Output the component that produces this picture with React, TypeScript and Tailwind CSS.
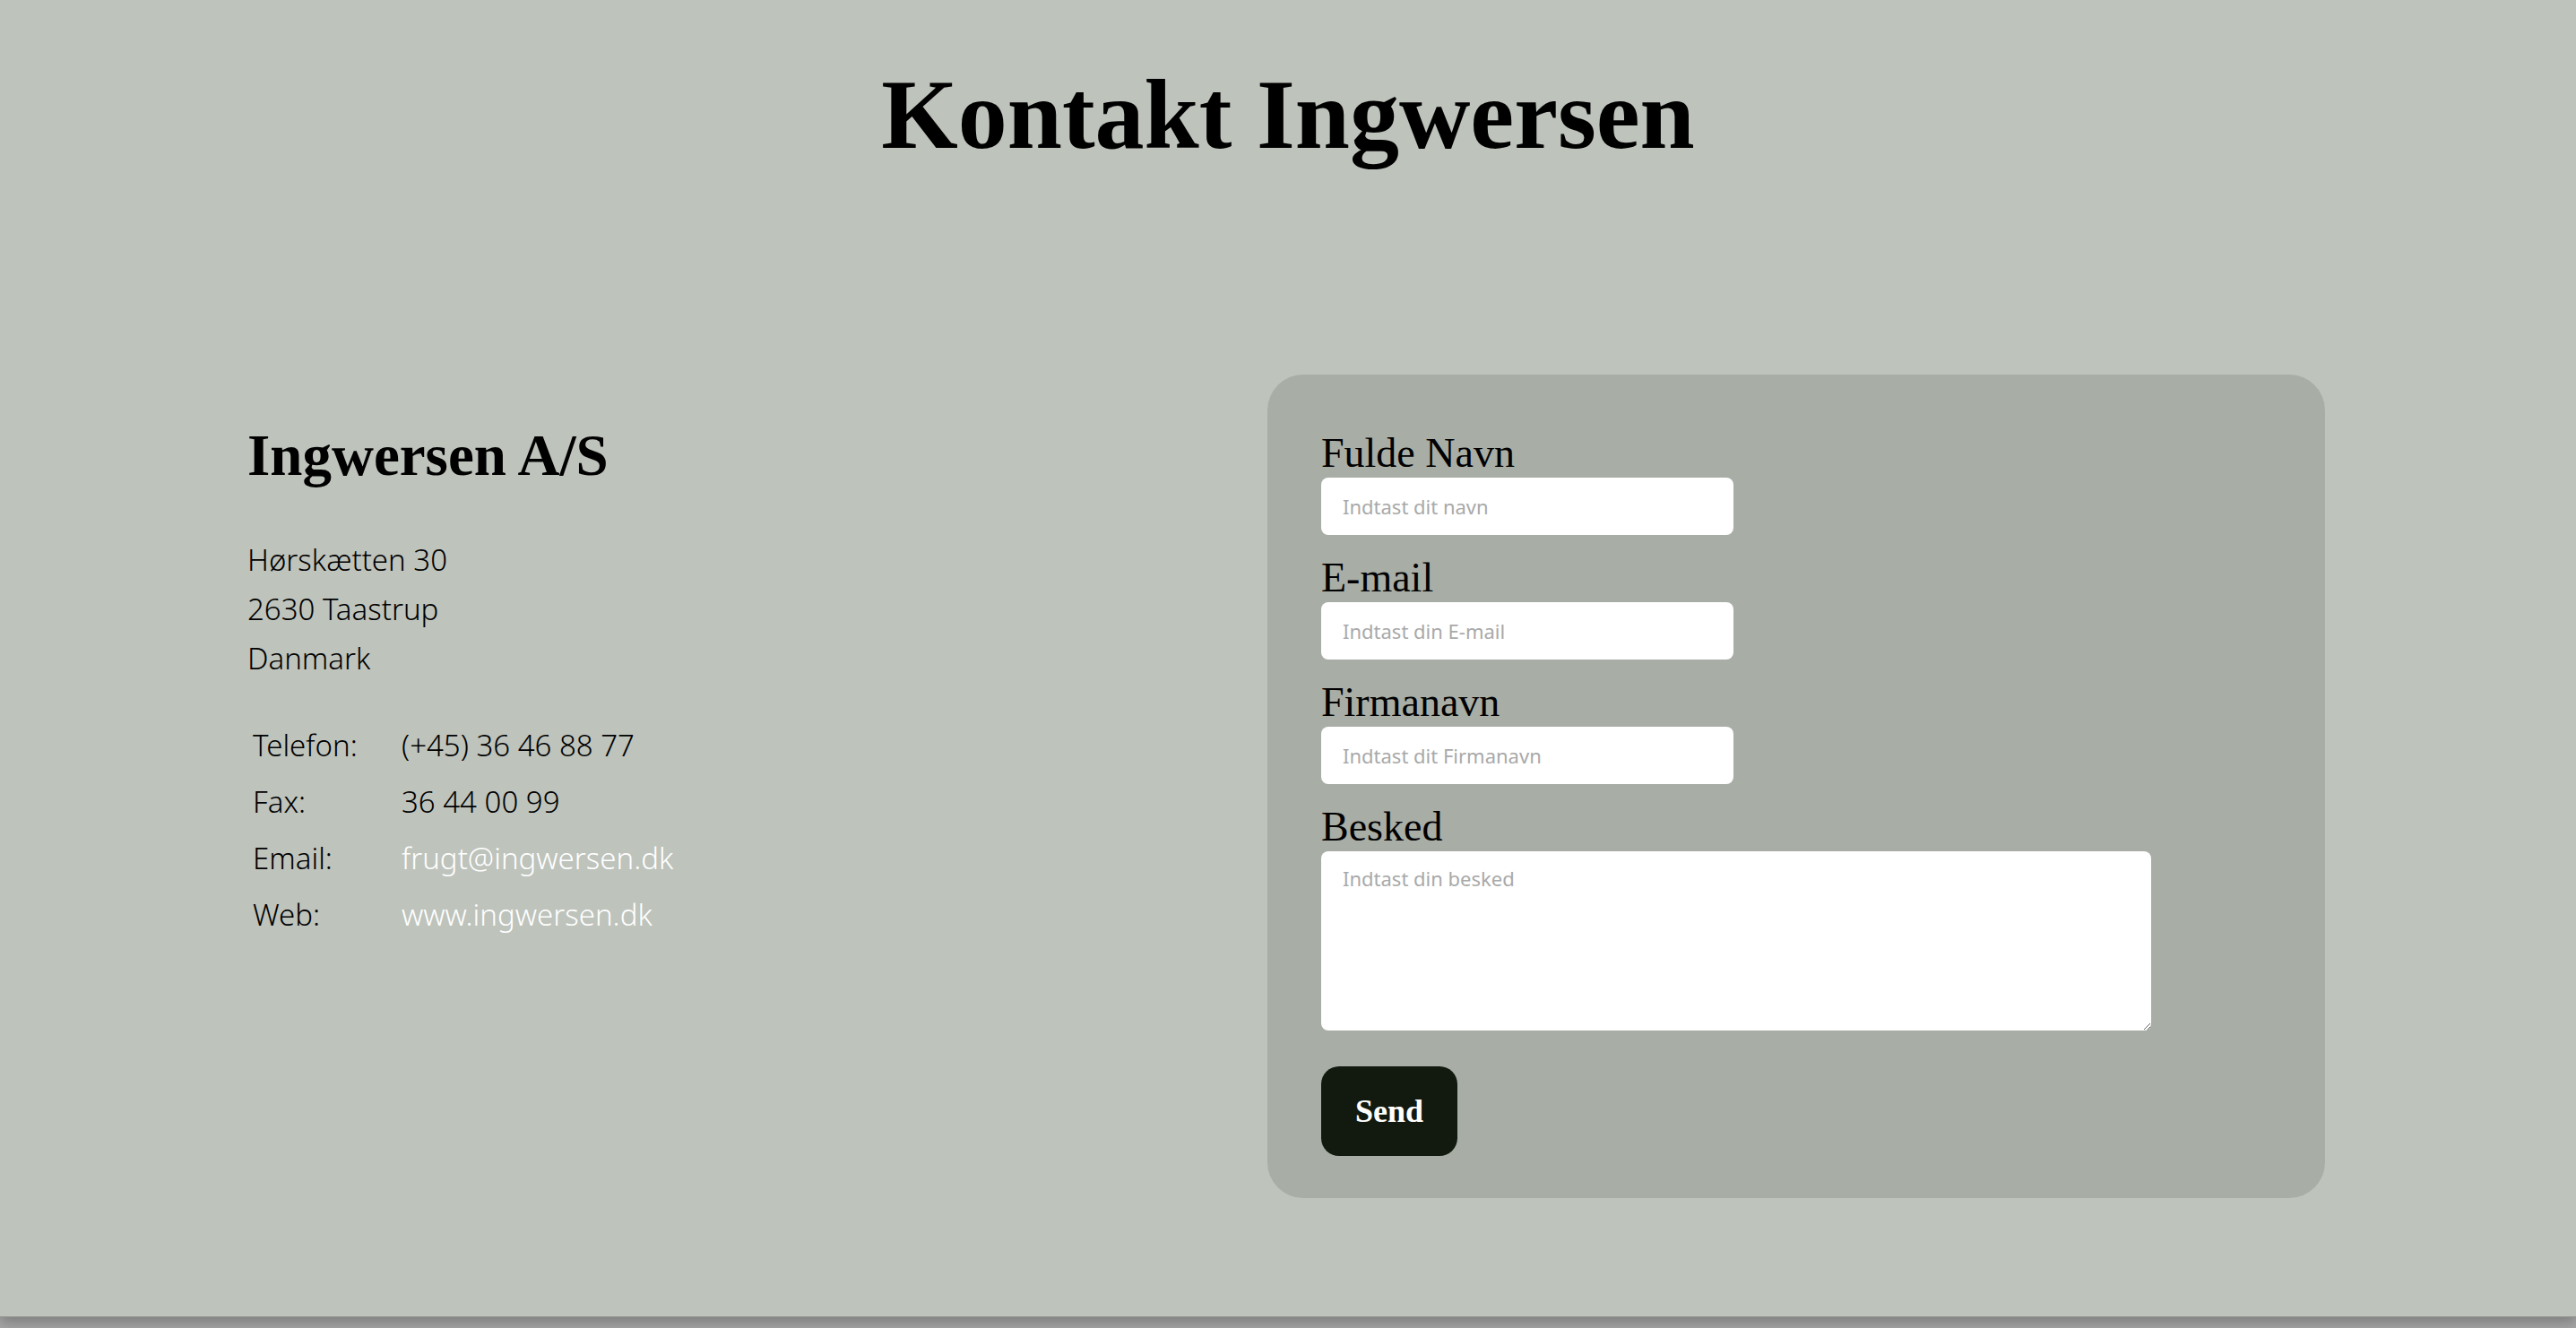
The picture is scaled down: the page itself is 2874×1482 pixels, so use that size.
import React from 'react'

const serif = { fontFamily: '"Liberation Serif", "Times New Roman", serif' }
const sans = { fontFamily: '"Noto Sans", "Open Sans", sans-serif' }

const contactRows = [
  { label: 'Telefon:', value: '(+45) 36 46 88 77', link: false },
  { label: 'Fax:', value: '36 44 00 99', link: false },
  { label: 'Email:', value: 'frugt@ingwersen.dk', link: true },
  { label: 'Web:', value: 'www.ingwersen.dk', link: true },
]

function Field({ label, placeholder }: { label: string; placeholder: string }) {
  return (
    <div className="flex flex-col">
      <label style={serif} className="text-[46px] leading-[44px] text-black mb-[5px]">
        {label}
      </label>
      <input
        type="text"
        placeholder={placeholder}
        style={sans}
        className="w-[460px] h-[64px] rounded-[8px] bg-white px-[24px] text-[22px] text-gray-800 placeholder:text-[#a9a9a9] outline-none"
      />
    </div>
  )
}

export default function App() {
  return (
    <div className="w-full min-h-screen bg-[#a7a7a7]">
      <section className="h-[1470px] bg-[#bec3bc] pt-[73px] border-b border-[#8f928d] shadow-[0_6px_14px_rgba(0,0,0,0.25)]">
        {/* Titel */}
        <h1 style={serif} className="text-center text-[110px] leading-none font-bold text-black">
          Kontakt Ingwersen
        </h1>

        <div className="flex items-start mt-[235px] pl-[276px] pr-[280px]">
          {/* Firmainfo */}
          <div className="flex-1 pt-[58px]">
            <h2 style={serif} className="text-[65px] leading-[64px] font-bold text-black">
              Ingwersen A/S
            </h2>

            <div style={sans} className="mt-[57px] text-[33px] leading-[55px] font-light text-black">
              <p>Hørskætten 30</p>
              <p>2630 Taastrup</p>
              <p>Danmark</p>
            </div>

            <div style={sans} className="mt-[38px] pl-[6px] grid grid-cols-[166px_auto] text-[33px] leading-[63px] font-light">
              {contactRows.map((row) => (
                <React.Fragment key={row.label}>
                  <span className="text-black">{row.label}</span>
                  {row.link ? (
                    <a href="#" className="text-white">{row.value}</a>
                  ) : (
                    <span className="text-black">{row.value}</span>
                  )}
                </React.Fragment>
              ))}
            </div>
          </div>

          {/* Kontaktformular */}
          <form className="w-[1180px] rounded-[40px] bg-[#a8ada6] pl-[60px] pt-[66px] pb-[47px] flex flex-col">
            <div className="flex flex-col gap-[26px]">
              <Field label="Fulde Navn" placeholder="Indtast dit navn" />
              <Field label="E-mail" placeholder="Indtast din E-mail" />
              <Field label="Firmanavn" placeholder="Indtast dit Firmanavn" />
              <div className="flex flex-col">
                <label style={serif} className="text-[46px] leading-[44px] text-black mb-[5px]">
                  Besked
                </label>
                <textarea
                  placeholder="Indtast din besked"
                  style={sans}
                  className="w-[926px] h-[200px] rounded-[8px] bg-white px-[24px] py-[14px] text-[22px] text-gray-800 placeholder:text-[#a9a9a9] outline-none"
                />
              </div>
            </div>

            <button
              type="button"
              style={serif}
              className="mt-[40px] w-[152px] h-[100px] rounded-[20px] bg-[#121a10] text-white text-[36px] font-bold"
            >
              Send
            </button>
          </form>
        </div>
      </section>
    </div>
  )
}
